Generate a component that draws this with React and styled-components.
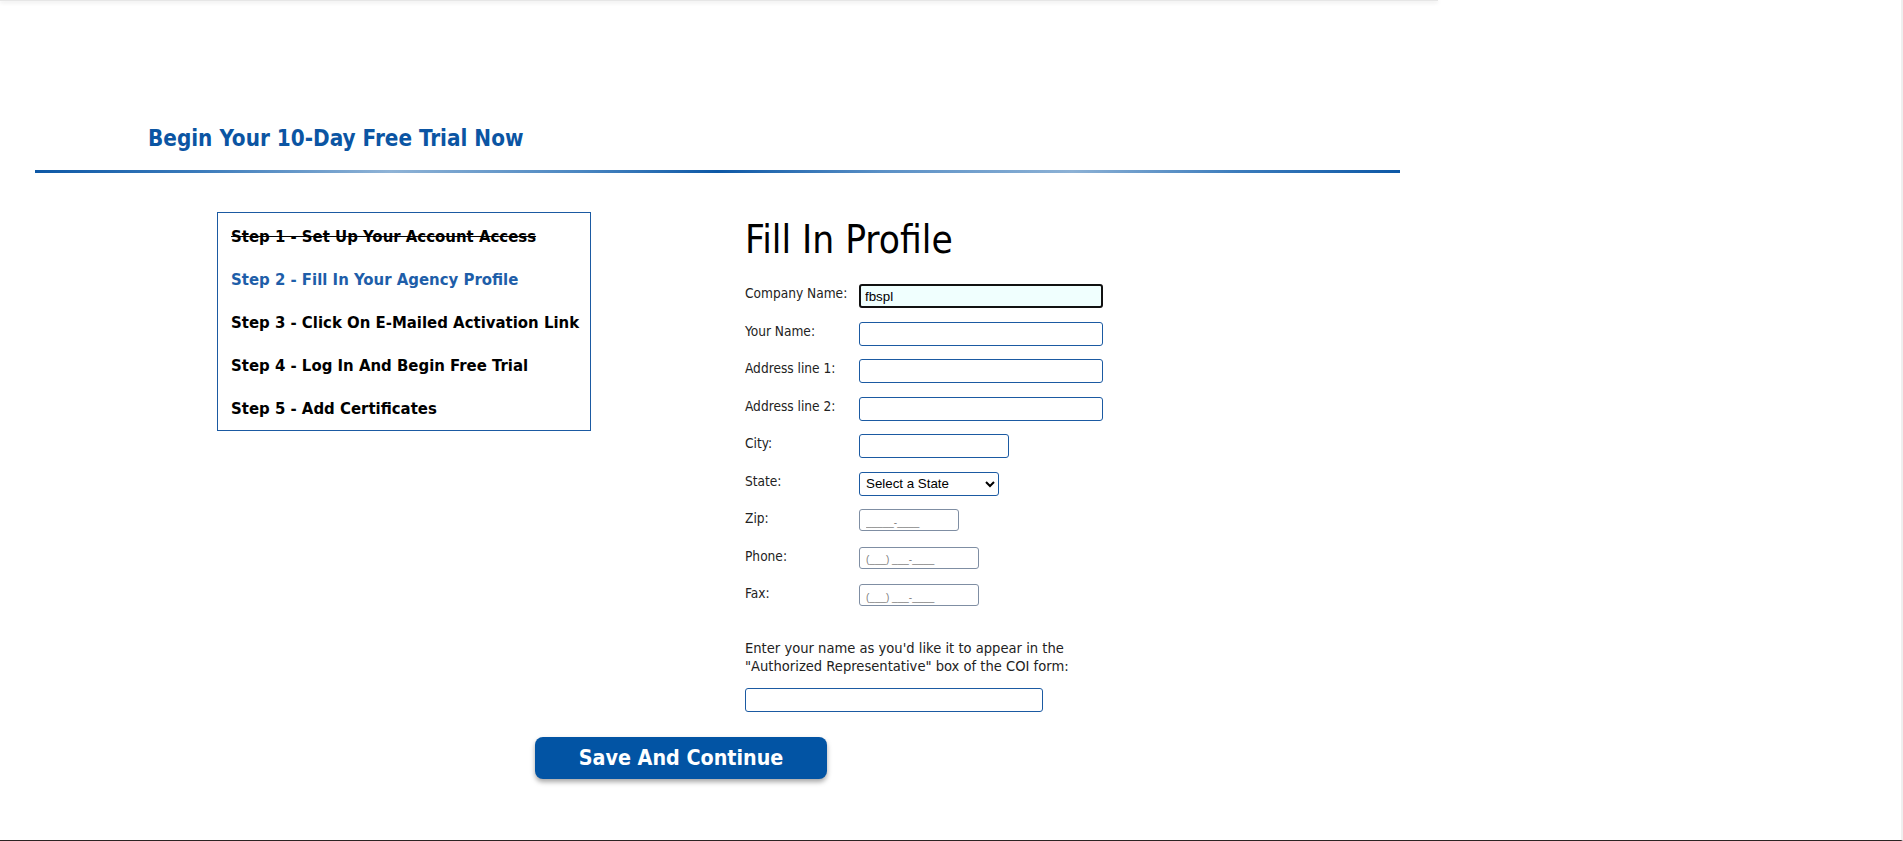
import React from 'react'
import styled, { createGlobalStyle } from 'styled-components'

const GlobalStyle = createGlobalStyle`
  html, body {
    margin: 0;
    padding: 0;
    background: #ffffff;
    overflow: hidden;
  }
`

const siteFont = `"DejaVu Sans Condensed", "DejaVu Sans", sans-serif`

const Page = styled.div`
  width: 1903px;
  height: 841px;
  box-sizing: border-box;
  border-bottom: 1px solid #2b2323;
  border-right: 2px solid #efefef;
  display: flex;
  flex-direction: column;
  font-family: ${siteFont};
  font-stretch: condensed;
  overflow: hidden;
`

const TopEdge = styled.div`
  width: 1438px;
  height: 1px;
  background: #e6e6e6;
  box-shadow: 0 1px 4px rgba(0, 0, 0, 0.22);
`

const Title = styled.h1`
  margin: 123px 0 0 148px;
  font-size: 22.3px;
  line-height: 28px;
  font-weight: bold;
  color: #0b55a3;
`

const Divider = styled.div`
  margin: 18px 0 0 35px;
  width: 1365px;
  height: 3px;
  background: linear-gradient(
    90deg,
    #0d58a6 0%,
    #3b7bbb 12%,
    #8fb3d6 26%,
    #4a86c1 40%,
    #0d58a6 50%,
    #5a90c6 62%,
    #8cb1d5 76%,
    #3c7cbc 88%,
    #0d58a6 100%
  );
`

const Content = styled.div`
  display: flex;
  align-items: flex-start;
  margin-top: 39px;
  padding-left: 217px;
`

const StepsBox = styled.ul`
  list-style: none;
  margin: 0;
  width: 374px;
  box-sizing: border-box;
  border: 1px solid #1b5aa2;
  padding: 2px 12px 0 13px;
`

const Step = styled.li`
  font-size: 16.6px;
  line-height: 43px;
  font-weight: bold;
  white-space: nowrap;
  color: ${p => (p.$current ? '#1e5ea9' : '#000000')};
  text-decoration: ${p => (p.$done ? 'line-through' : 'none')};
`

const FormColumn = styled.div`
  margin-left: 154px;
  width: 420px;
`

const FormHeading = styled.h2`
  margin: 2px 0 18px;
  font-size: 38.5px;
  line-height: 52px;
  font-weight: normal;
  color: #000;
`

const FieldGrid = styled.div`
  display: grid;
  grid-template-columns: 114px auto;
  grid-auto-rows: 37.5px;
  align-items: start;
`

const Label = styled.label`
  font-size: 13.6px;
  line-height: 18px;
  color: #222;
  white-space: nowrap;
`

const TextInput = styled.input`
  box-sizing: border-box;
  width: ${p => p.$width}px;
  height: ${p => (p.$masked ? 22 : 24)}px;
  margin: 0;
  padding: ${p => (p.$masked ? '4px 6px 0' : '1px 4px')};
  font-family: "Liberation Sans", Arial, sans-serif;
  font-size: ${p => (p.$masked ? '10px' : '13.33px')};
  color: #000;
  border-radius: 3px;
  border: ${p => (p.$active ? '2px solid #111' : p.$masked ? '1px solid #7f8ea3' : '1px solid #1b5aa2')};
  background: ${p => (p.$active ? '#f0fffe' : '#fff')};
  outline: none;

  &::placeholder {
    color: #808080;
  }
`

const StateSelect = styled.select`
  box-sizing: border-box;
  width: 140px;
  height: 24px;
  margin: 0;
  padding: 0 2px;
  font-family: "Liberation Sans", Arial, sans-serif;
  font-size: 13.33px;
  color: #000;
  background: #fff;
  border: 1px solid #1b5aa2;
  border-radius: 3px;
`

const Note = styled.p`
  margin: 17px 0 0;
  font-size: 14.6px;
  line-height: 18px;
  color: #222;
  white-space: nowrap;
`

const RepInput = styled(TextInput)`
  margin-top: 13px;
`

const ButtonRow = styled.div`
  padding-left: 535px;
  margin-top: 25px;
`

const SaveButton = styled.button`
  width: 292px;
  height: 42px;
  border: none;
  border-radius: 8px;
  background: #0254a4;
  color: #fff;
  font-family: ${siteFont};
  font-stretch: condensed;
  font-size: 21.3px;
  font-weight: bold;
  box-shadow: 0 3px 5px rgba(0, 0, 0, 0.35);
  cursor: pointer;
`

const steps = [
  { text: 'Step 1 - Set Up Your Account Access', done: true },
  { text: 'Step 2 - Fill In Your Agency Profile', current: true },
  { text: 'Step 3 - Click On E-Mailed Activation Link' },
  { text: 'Step 4 - Log In And Begin Free Trial' },
  { text: 'Step 5 - Add Certificates' },
]

const fields = [
  { label: 'Company Name:', width: 244, value: 'fbspl', active: true },
  { label: 'Your Name:', width: 244 },
  { label: 'Address line 1:', width: 244 },
  { label: 'Address line 2:', width: 244 },
  { label: 'City:', width: 150 },
  { label: 'State:', select: true },
  { label: 'Zip:', width: 100, masked: true, placeholder: '_____-____' },
  { label: 'Phone:', width: 120, masked: true, placeholder: '(___) ___-____' },
  { label: 'Fax:', width: 120, masked: true, placeholder: '(___) ___-____' },
]

export default function App() {
  return (
    <>
      <GlobalStyle />
      <Page>
        <TopEdge />
        <Title>Begin Your 10-Day Free Trial Now</Title>
        <Divider />
        <Content>
          <StepsBox>
            {steps.map(s => (
              <Step key={s.text} $done={s.done} $current={s.current}>{s.text}</Step>
            ))}
          </StepsBox>
          <FormColumn>
            <FormHeading>Fill In Profile</FormHeading>
            <FieldGrid>
              {fields.map(f => (
                <React.Fragment key={f.label}>
                  <Label>{f.label}</Label>
                  {f.select ? (
                    <StateSelect defaultValue="">
                      <option value="">Select a State</option>
                    </StateSelect>
                  ) : (
                    <TextInput
                      type="text"
                      $width={f.width}
                      $masked={f.masked}
                      $active={f.active}
                      defaultValue={f.value}
                      placeholder={f.placeholder}
                    />
                  )}
                </React.Fragment>
              ))}
            </FieldGrid>
            <Note>
              Enter your name as you'd like it to appear in the<br />
              "Authorized Representative" box of the COI form:
            </Note>
            <RepInput type="text" $width={298} />
          </FormColumn>
        </Content>
        <ButtonRow>
          <SaveButton>Save And Continue</SaveButton>
        </ButtonRow>
      </Page>
    </>
  )
}
